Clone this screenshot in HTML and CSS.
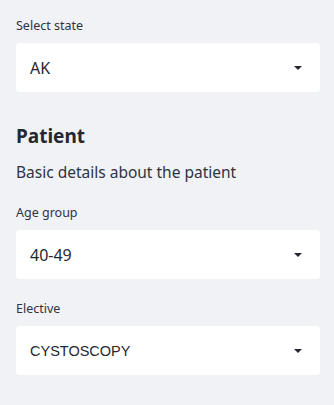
FILE: index.html
```html
<!DOCTYPE html>
<html lang="en">
<head>
    <meta charset="UTF-8">
    <meta name="viewport" content="width=device-width, initial-scale=1.0">
    <title>Sidebar</title>
    <link rel="stylesheet" href="styles.css">
</head>
<body>
    <div class="sidebar">
        <div class="field">
            <label class="field-label">Select state</label>
            <div class="select">
                <span class="select-value">AK</span>
                <span class="select-arrow"></span>
            </div>
        </div>

        <h3 class="section-title">Patient</h3>
        <p class="section-desc">Basic details about the patient</p>

        <div class="field field-gap">
            <label class="field-label">Age group</label>
            <div class="select">
                <span class="select-value">40-49</span>
                <span class="select-arrow"></span>
            </div>
        </div>

        <div class="field field-gap-lg">
            <label class="field-label">Elective</label>
            <div class="select">
                <span class="select-value value-caps">CYSTOSCOPY</span>
                <span class="select-arrow"></span>
            </div>
        </div>
    </div>
</body>
</html>
```

FILE: styles.css
```css
body {
    margin: 0;
    background: #f0f2f6;
    font-family: 'Noto Sans', 'Open Sans', sans-serif;
    color: #31333f;
}

.sidebar {
    padding: 17px 14px 0 16px;
}

.field {
    display: flex;
    flex-direction: column;
}

.field-gap {
    margin-top: 20px;
}

.field-gap-lg {
    margin-top: 21px;
}

.field-label {
    font-size: 12.5px;
    line-height: 18px;
    margin-bottom: 8px;
    color: #31333f;
}

.select {
    background: white;
    border-radius: 4px;
    height: 49px;
    display: flex;
    align-items: center;
    justify-content: space-between;
    padding: 0 18px 0 14px;
    box-sizing: border-box;
}

.select-value {
    font-size: 16px;
    color: #262730;
}

.value-caps {
    font-family: 'Liberation Sans', Arial, sans-serif;
    font-size: 14.5px;
}

.select-arrow {
    width: 0;
    height: 0;
    border-left: 4px solid transparent;
    border-right: 4px solid transparent;
    border-top: 4px solid #262730;
}

.section-title {
    margin: 30px 0 0;
    font-size: 19px;
    line-height: 28px;
    font-weight: 700;
    color: #262730;
}

.section-desc {
    margin: 10px 0 0;
    font-size: 15.5px;
    line-height: 24px;
    color: #31333f;
}
```
